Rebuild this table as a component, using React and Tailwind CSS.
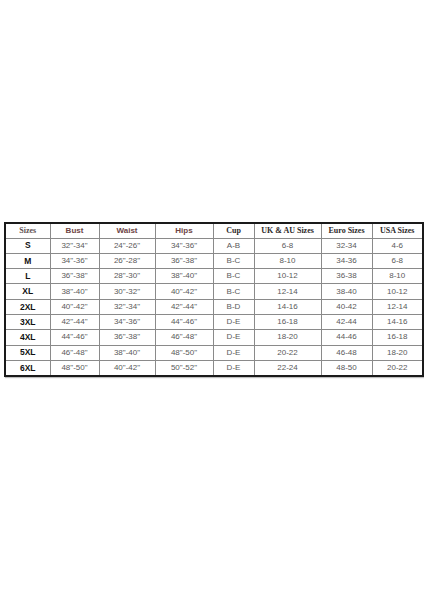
const rows = [
  ["S", "32\"-34\"", "24\"-26\"", "34\"-36\"", "A-B", "6-8", "32-34", "4-6"],
  ["M", "34\"-36\"", "26\"-28\"", "36\"-38\"", "B-C", "8-10", "34-36", "6-8"],
  ["L", "36\"-38\"", "28\"-30\"", "38\"-40\"", "B-C", "10-12", "36-38", "8-10"],
  ["XL", "38\"-40\"", "30\"-32\"", "40\"-42\"", "B-C", "12-14", "38-40", "10-12"],
  ["2XL", "40\"-42\"", "32\"-34\"", "42\"-44\"", "B-D", "14-16", "40-42", "12-14"],
  ["3XL", "42\"-44\"", "34\"-36\"", "44\"-46\"", "D-E", "16-18", "42-44", "14-16"],
  ["4XL", "44\"-46\"", "36\"-38\"", "46\"-48\"", "D-E", "18-20", "44-46", "16-18"],
  ["5XL", "46\"-48\"", "38\"-40\"", "48\"-50\"", "D-E", "20-22", "46-48", "18-20"],
  ["6XL", "48\"-50\"", "40\"-42\"", "50\"-52\"", "D-E", "22-24", "48-50", "20-22"],
];

const widths = [45, 49, 56, 58, 41, 67, 51, 51];

const serifHead = "font-['Liberation_Serif',serif] font-bold text-[8px]";
const sansHead = "font-['Liberation_Sans',sans-serif] font-bold text-[8px] text-[#6e4545]";

const headers = [
  { label: "Sizes", cls: `${serifHead} text-[#5e5252]` },
  { label: "Bust", cls: sansHead },
  { label: "Waist", cls: sansHead },
  { label: "Hips", cls: sansHead },
  { label: "Cup", cls: `${serifHead} text-[#2e2a2a]` },
  { label: "UK & AU Sizes", cls: `${serifHead} text-[#2e2a2a]` },
  { label: "Euro Sizes", cls: `${serifHead} text-[#2e2a2a]` },
  { label: "USA Sizes", cls: `${serifHead} text-[#2e2a2a]` },
];

export default function App() {
  return (
    <div className="w-[424px] h-[600px] bg-white pt-[222px] pl-[4px]">
      <table className="table-fixed border-collapse w-[418px] border-2 border-[#1a1a1a] shadow-[1px_1px_1px_rgba(0,0,0,0.25)]">
        <colgroup>
          {widths.map((w, i) => (
            <col key={i} style={{ width: w }} />
          ))}
        </colgroup>
        <thead>
          <tr className="h-[15px]">
            {headers.map((h) => (
              <th
                key={h.label}
                className={`border border-[#8a8a8a] p-0 text-center leading-none ${h.cls}`}
              >
                {h.label}
              </th>
            ))}
          </tr>
        </thead>
        <tbody>
          {rows.map((r) => (
            <tr key={r[0]} className="h-[15.3px]">
              {r.map((c, i) => (
                <td
                  key={i}
                  className={`border border-[#8a8a8a] p-0 text-center leading-none font-['Liberation_Sans',sans-serif] ${
                    i === 0
                      ? "font-bold text-[8.5px] text-[#111]"
                      : "text-[8px] text-[#5a5a5a]"
                  }`}
                >
                  {c}
                </td>
              ))}
            </tr>
          ))}
        </tbody>
      </table>
    </div>
  );
}
